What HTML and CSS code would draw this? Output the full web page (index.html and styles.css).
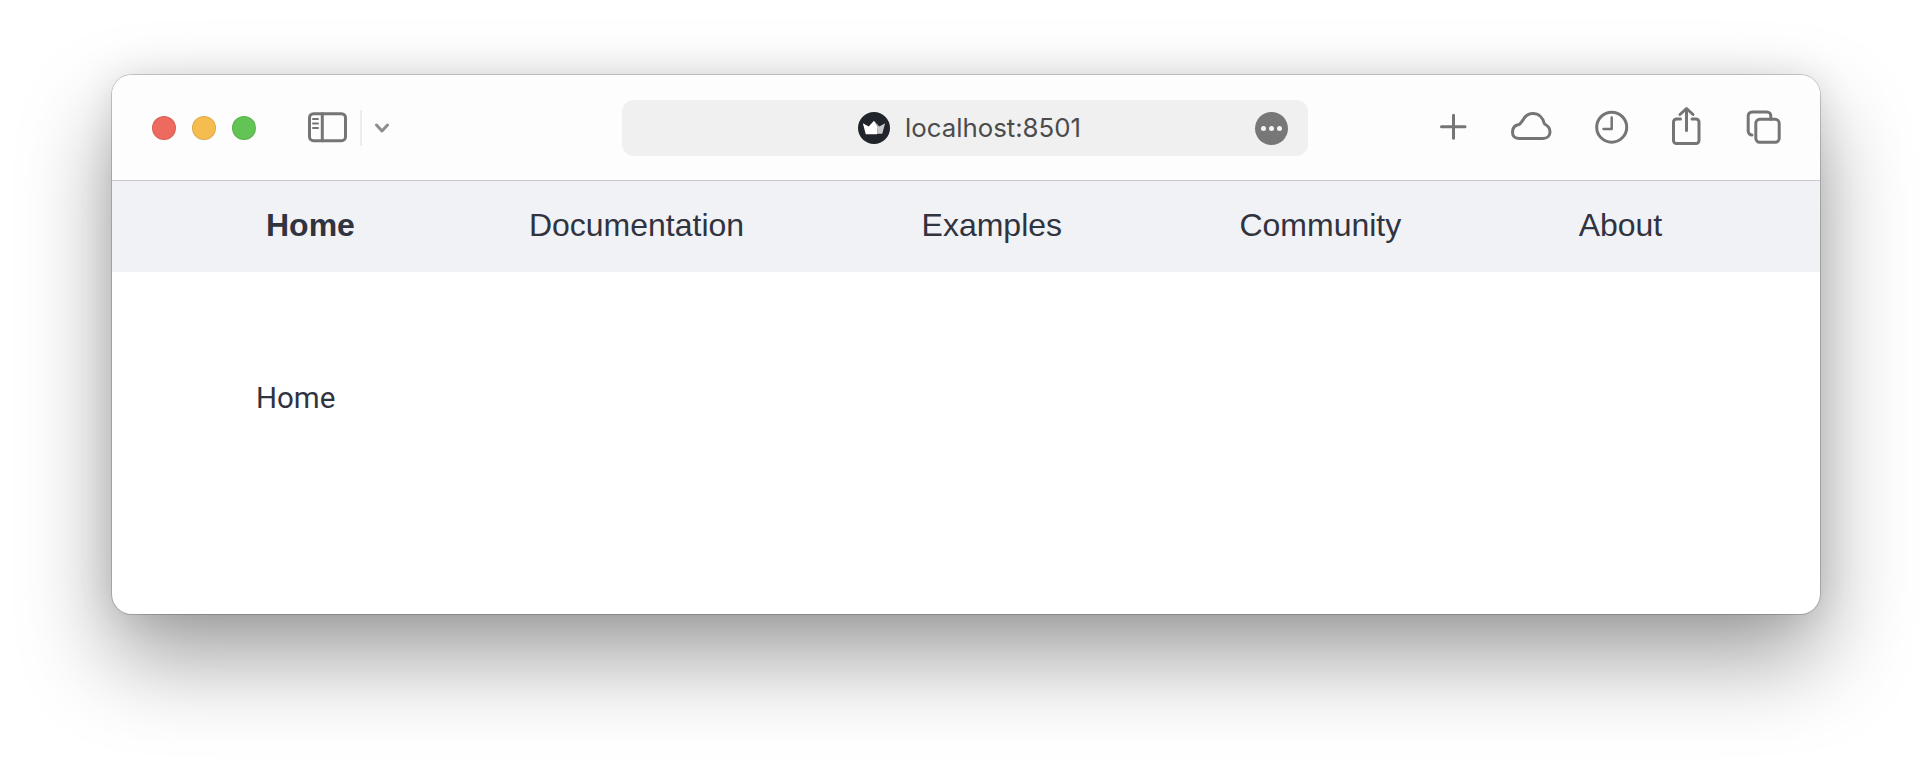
FILE: index.html
```html
<!DOCTYPE html>
<html lang="en">
<head>
  <meta charset="UTF-8">
  <meta name="viewport" content="width=device-width, initial-scale=1">
  <title>localhost:8501</title>
  <link rel="stylesheet" href="styles.css">
</head>
<body>
  <div class="window">
    <header class="toolbar">
      <div class="toolbar-left">
        <span class="light light-red"></span>
        <span class="light light-yellow"></span>
        <span class="light light-green"></span>
        <svg class="icon sidebar-icon" width="40" height="44" viewBox="0 0 40 44">
          <rect x="1.5" y="7.700" width="36" height="27" rx="4"/>
          <path d="M14.300 7.700v27"/>
          <path class="thin" d="M5 13h5M5 17.500h5M5 22h5"/>
        </svg>
        <span class="divider"></span>
        <svg class="icon chevron" width="14" height="44" viewBox="0 0 14 44">
          <path d="M1.500 19l5.500 6 5.500-6"/>
        </svg>
      </div>
      <div class="address">
        <svg class="crown" width="32" height="32" viewBox="0 0 33 33">
          <circle cx="16.500" cy="16.500" r="16.500" fill="#22242b"/>
          <path fill="#fff" d="M5 11.500l6 3.500 5.500-6 4 6.500-1 7.500H8z"/>
          <path fill="#c9c9cc" d="M16.500 9l5.500 6 6-3.500-3 11h-5.500l1-7.500z"/>
        </svg>
        <span class="url">localhost:8501</span>
        <span class="more"><i></i><i></i><i></i></span>
      </div>
      <div class="toolbar-right">
        <svg class="icon" width="28" height="44" viewBox="0 0 28 44">
          <path d="M14.500 9.300v23M2.500 20.800h23.500"/>
        </svg>
        <svg class="icon" width="42" height="44" viewBox="0 0 42 44">
          <path d="M9.500 32.500C5 32.500 2.500 30 2.500 26.500C2.500 22 5 19 9 18.500C10.500 18 11.500 16 13 14C15 10 19 7.500 23 7.500C28.500 7.500 33 11.500 34.500 18C37.500 19.500 40 22.500 40 26C40 30 37 32.500 33 32.500Z"/>
        </svg>
        <svg class="icon" width="34" height="44" viewBox="0 0 34 44">
          <circle cx="16.700" cy="21.200" r="15"/>
          <path class="thin" d="M16.700 11.500v11.500H8.500"/>
        </svg>
        <svg class="icon" width="30" height="44" viewBox="0 0 30 44">
          <path d="M8.500 13H4.500a3 3 0 0 0-3 3V34.500a3 3 0 0 0 3 3h19.500a3 3 0 0 0 3-3V16a3 3 0 0 0-3-3h-4"/>
          <path d="M14.500 24.500V3M8 8.500l6.500-6 6.500 6"/>
        </svg>
        <svg class="icon tabs-icon" width="36" height="44" viewBox="0 0 36 44">
          <path d="M6 29A3.800 3.800 0 0 1 2.200 25.200V9.800A3.800 3.800 0 0 1 6 6H21A3.800 3.800 0 0 1 24.800 9.800V13.300"/>
          <rect x="9.800" y="13.300" width="23.400" height="23" rx="4"/>
        </svg>
      </div>
    </header>

    <nav class="nav">
      <a class="nav-link active">Home</a>
      <a class="nav-link">Documentation</a>
      <a class="nav-link">Examples</a>
      <a class="nav-link">Community</a>
      <a class="nav-link">About</a>
    </nav>

    <main class="content">
      <p>Home</p>
    </main>
  </div>
</body>
</html>
```

FILE: styles.css
```css
body {
  margin: 0;
  height: 762px;
  background: #fff;
  color: #31333f;
  font-family: "Liberation Sans", Arial, sans-serif;
  overflow: hidden;
}
.window {
  width: 1708px;
  height: 539px;
  margin: 75px auto 0;
  background: #fff;
  border-radius: 20px;
  overflow: hidden;
  display: flex;
  flex-direction: column;
  box-shadow: 0 0 0 1px rgba(0, 0, 0, 0.18), 0 44px 90px rgba(0, 0, 0, 0.38), 0 0 36px rgba(0, 0, 0, 0.1);
}
.toolbar {
  height: 105px;
  flex: none;
  display: grid;
  grid-template-columns: 510px 686px 1fr;
  align-items: center;
  background: #fdfdfd;
  border-bottom: 1px solid #c8c9cd;
}
.toolbar-left {
  display: flex;
  align-items: center;
  padding-left: 40px;
}
.light {
  width: 24px;
  height: 24px;
  margin-right: 16px;
  border-radius: 50%;
  box-sizing: border-box;
  border: 1px solid rgba(0, 0, 0, 0.1);
}
.light-red { background: #ee6a5f; }
.light-yellow { background: #f5bd4f; }
.light-green { background: #61c454; }
.icon {
  display: block;
  flex: none;
  fill: none;
  stroke: #757575;
  stroke-width: 3;
  stroke-linecap: round;
  stroke-linejoin: round;
}
.icon .thin {
  stroke-width: 2.500;
}
.sidebar-icon {
  margin-left: 36px;
}
.sidebar-icon .thin {
  stroke-width: 2;
}
.divider {
  width: 2px;
  height: 36px;
  margin: 0 13px 0 12px;
  background: #ececec;
}
.chevron {
  stroke: #8e8e8e;
}
.address {
  height: 56px;
  position: relative;
  display: flex;
  align-items: center;
  justify-content: center;
  gap: 15px;
  padding-left: 9px;
  box-sizing: border-box;
  background: #f0f0f0;
  border-radius: 12px;
}
.crown {
  display: block;
}
.url {
  font-family: Inter, "Liberation Sans", sans-serif;
  font-size: 25.800px;
  color: #4b4b4b;
}
.more {
  position: absolute;
  right: 20px;
  top: 12px;
  width: 33px;
  height: 33px;
  border-radius: 50%;
  background: #777;
  display: flex;
  align-items: center;
  justify-content: center;
  gap: 3px;
}
.more i {
  width: 5px;
  height: 5px;
  border-radius: 50%;
  background: #f4f4f4;
}
.toolbar-right {
  display: flex;
  align-items: center;
  justify-content: flex-end;
  gap: 43px;
  padding-right: 38px;
}
.tabs-icon {
  margin-left: 1px;
}
.nav {
  height: 91px;
  flex: none;
  display: flex;
  align-items: center;
  gap: 177.400px;
  padding: 0 0 4px 154px;
  box-sizing: border-box;
  background: #f0f2f6;
}
.nav-link {
  font-size: 32px;
  line-height: 40px;
}
.nav-link.active {
  font-weight: 700;
  margin-right: -3.400px;
}
.content {
  flex: 1;
  padding: 106px 0 0 144px;
}
.content p {
  margin: 0;
  font-family: Roboto, sans-serif;
  font-size: 29.500px;
  line-height: 40px;
}
```
